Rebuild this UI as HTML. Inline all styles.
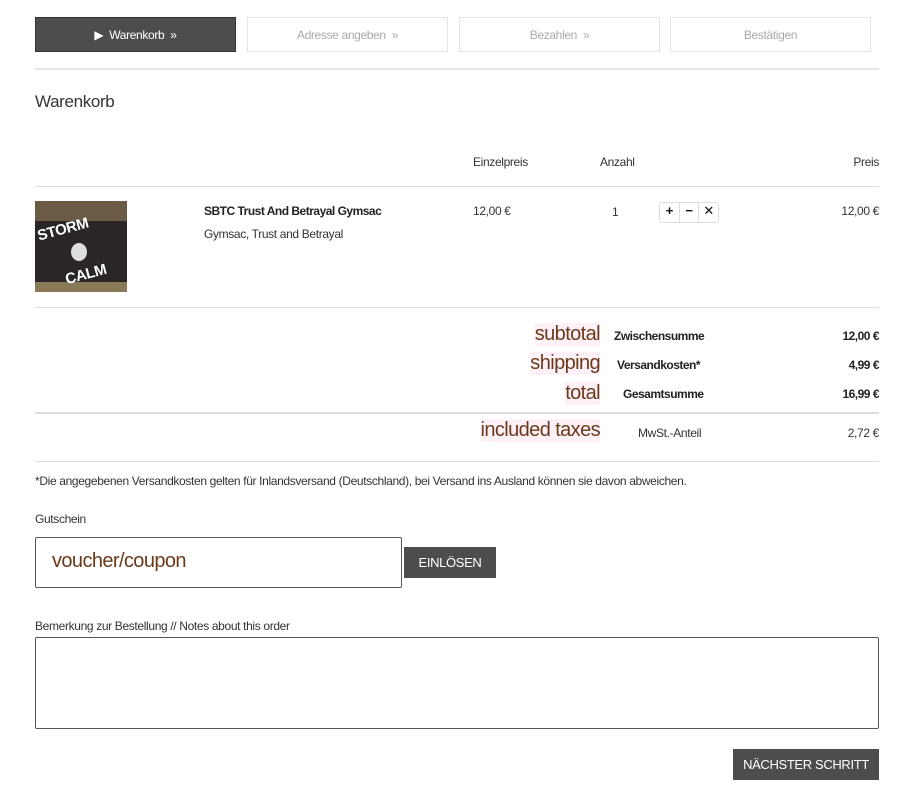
<!DOCTYPE html>
<html><head><meta charset="utf-8"><style>
body{margin:0;background:#fff;font-family:"Liberation Sans Narrow","Liberation Sans",sans-serif;color:#333;width:910px;height:792px;overflow:hidden;position:relative;letter-spacing:-0.35px}
.a{position:absolute;white-space:nowrap}
.step{position:absolute;top:17px;height:35px;width:201px;border:1px solid #e4e4e4;box-sizing:border-box;text-align:center;line-height:34px;font-size:12px;color:#aaa}
.hr{position:absolute;left:35px;width:844px;height:1px;background:#ddd}
.brown{color:#6b3a1a;font-size:20px;background:#fdf0f6;letter-spacing:-0.6px}
.b{font-weight:bold;font-size:12px;color:#222;letter-spacing:-0.5px}
</style></head><body>
<div class="step" style="left:35px;background:#4d4d4d;border-color:#333;color:#fff">&#9654;&nbsp; Warenkorb &nbsp;»</div>
<div class="step" style="left:247px">Adresse angeben &nbsp;»</div>
<div class="step" style="left:459px">Bezahlen &nbsp;»</div>
<div class="step" style="left:670px">Bestätigen</div>
<div class="hr" style="top:68px;height:2px;background:#e6e6e6"></div>
<div class="a" style="left:35px;top:92px;font-size:17px;color:#333">Warenkorb</div>
<div class="a" style="left:473px;top:155px;font-size:12px">Einzelpreis</div>
<div class="a" style="left:600px;top:155px;font-size:12px">Anzahl</div>
<div class="a" style="right:31px;top:155px;font-size:12px">Preis</div>
<div class="hr" style="top:186px"></div>
<div class="a" style="left:35px;top:201px;width:92px;height:91px;background:#2a2628;overflow:hidden">
<div style="position:absolute;left:0;top:0;width:92px;height:20px;background:#6b5a44"></div>
<div style="position:absolute;left:0;bottom:0;width:92px;height:10px;background:#8a7a58"></div>
<div style="position:absolute;left:2px;top:20px;color:#fff;font-weight:bold;font-size:15px;transform:rotate(-15deg)">STORM</div>
<div style="position:absolute;left:30px;top:65px;color:#fff;font-weight:bold;font-size:15px;transform:rotate(-15deg)">CALM</div>
<div style="position:absolute;left:36px;top:42px;width:16px;height:18px;border-radius:50%;background:#ddd"></div></div>
<div class="a b" style="left:204px;top:204px">SBTC Trust And Betrayal Gymsac</div>
<div class="a" style="left:204px;top:227px;font-size:12px">Gymsac, Trust and Betrayal</div>
<div class="a" style="left:473px;top:204px;font-size:12px">12,00 €</div>
<div class="a" style="left:612px;top:205px;font-size:12px">1</div>
<div class="a" style="left:659px;top:202px;width:58px;height:19px;border:1px solid #ddd;border-radius:3px;font-size:13px;color:#111;font-weight:bold;display:flex">
<span style="flex:1;text-align:center;border-right:1px solid #ddd">+</span><span style="flex:1;text-align:center;border-right:1px solid #ddd">−</span><span style="flex:1;text-align:center;font-weight:normal">✕</span></div>
<div class="a" style="right:31px;top:204px;font-size:12px">12,00 €</div>
<div class="hr" style="top:307px"></div>
<div class="a brown" style="right:310px;top:323px">subtotal</div>
<div class="a b" style="left:614px;top:329px">Zwischensumme</div>
<div class="a b" style="right:31px;top:329px">12,00 €</div>
<div class="a brown" style="right:310px;top:352px">shipping</div>
<div class="a b" style="left:617px;top:358px">Versandkosten*</div>
<div class="a b" style="right:31px;top:358px">4,99 €</div>
<div class="a brown" style="right:310px;top:382px">total</div>
<div class="a b" style="left:623px;top:387px">Gesamtsumme</div>
<div class="a b" style="right:31px;top:387px">16,99 €</div>
<div class="hr" style="top:412px;height:2px"></div>
<div class="a brown" style="right:310px;top:419px">included taxes</div>
<div class="a" style="left:638px;top:426px;font-size:12px">MwSt.-Anteil</div>
<div class="a" style="right:31px;top:426px;font-size:12px">2,72 €</div>
<div class="hr" style="top:461px"></div>
<div class="a" style="left:35px;top:474px;font-size:12px">*Die angegebenen Versandkosten gelten für Inlandsversand (Deutschland), bei Versand ins Ausland können sie davon abweichen.</div>
<div class="a" style="left:35px;top:512px;font-size:12px">Gutschein</div>
<div class="a" style="left:35px;top:537px;width:365px;height:49px;border:1px solid #555;border-radius:2px"></div>
<div class="a" style="left:52px;top:550px;font-size:20px;color:#6b3a1a;letter-spacing:-0.6px">voucher/coupon</div>
<div class="a" style="left:404px;top:547px;width:92px;height:31px;background:#4d4d4d;color:#fff;font-size:13px;text-align:center;line-height:31px">EINLÖSEN</div>
<div class="a" style="left:35px;top:619px;font-size:12px">Bemerkung zur Bestellung // Notes about this order</div>
<div class="a" style="left:35px;top:637px;width:842px;height:90px;border:1px solid #555;border-radius:2px"></div>
<div class="a" style="left:733px;top:749px;width:146px;height:31px;background:#4d4d4d;color:#fff;font-size:13px;text-align:center;line-height:31px">NÄCHSTER SCHRITT</div>
</body></html>
